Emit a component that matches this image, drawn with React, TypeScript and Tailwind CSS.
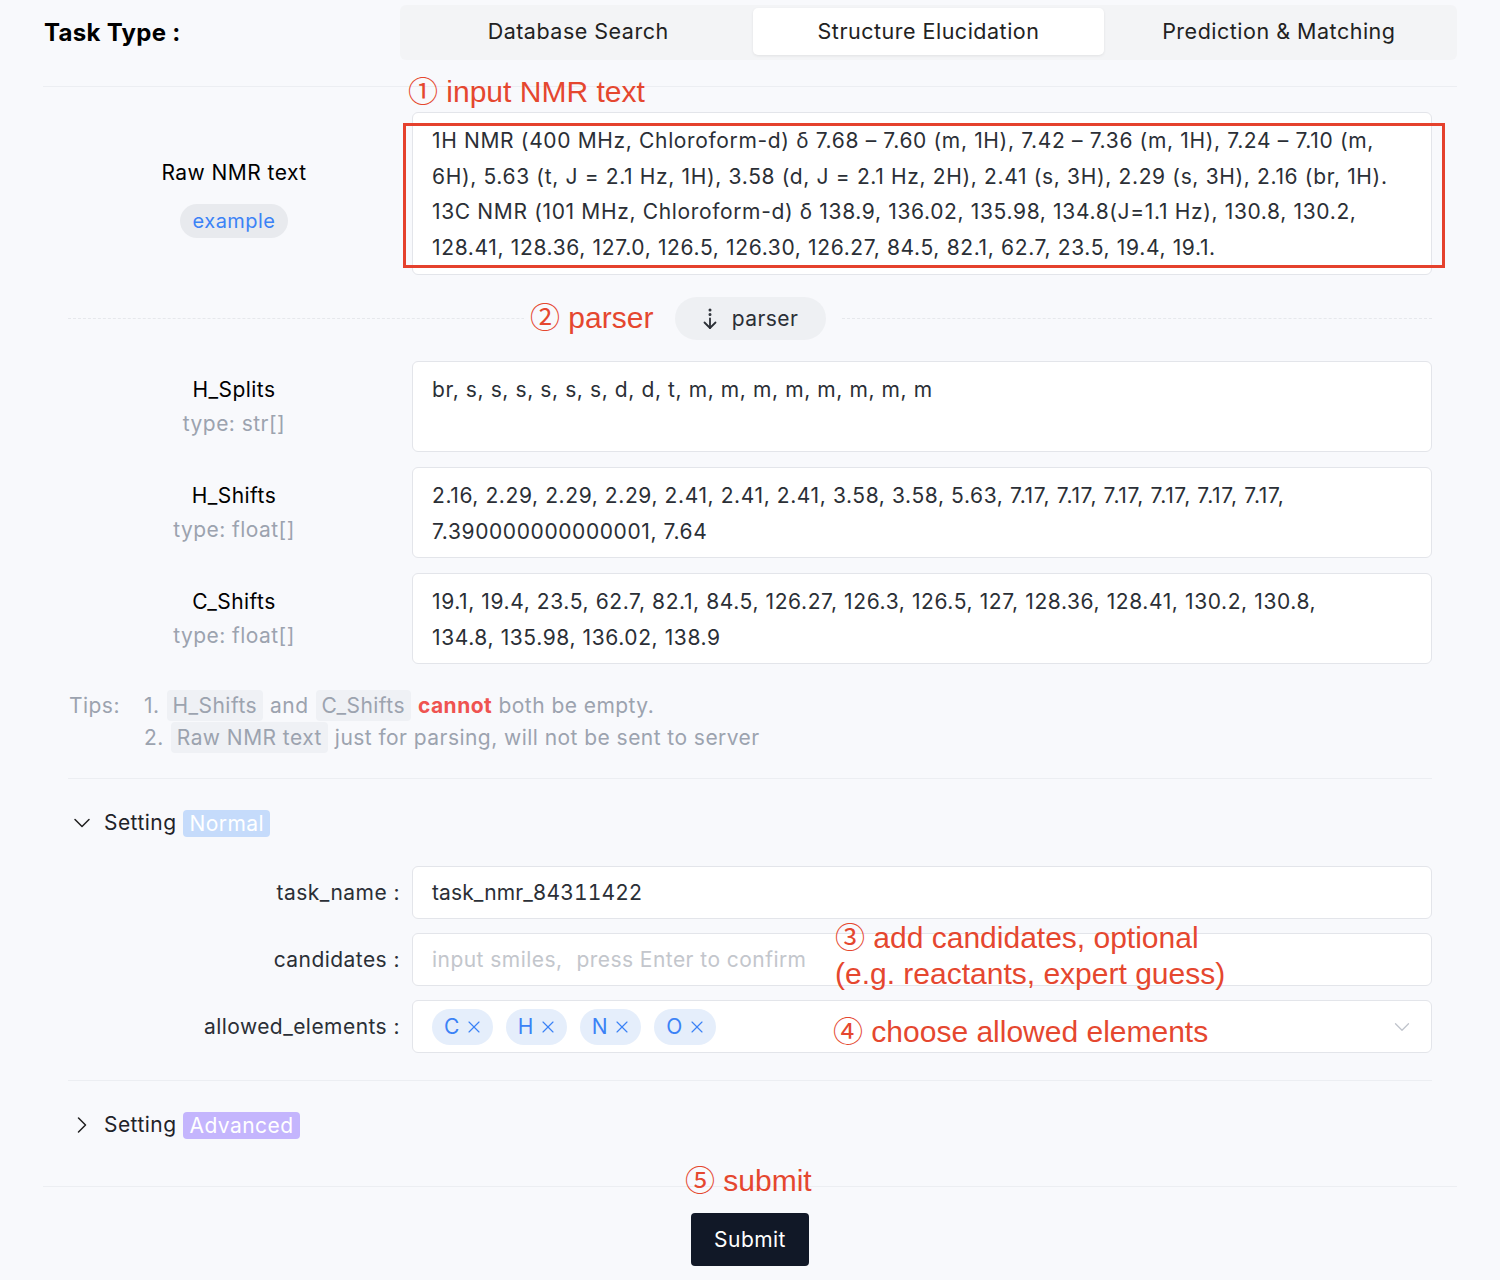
import { ChevronDown, ChevronRight, X } from 'lucide-react'

const rawLines = [
  '1H NMR (400 MHz, Chloroform-d) δ 7.68 – 7.60 (m, 1H), 7.42 – 7.36 (m, 1H), 7.24 – 7.10 (m,',
  '6H), 5.63 (t, J = 2.1 Hz, 1H), 3.58 (d, J = 2.1 Hz, 2H), 2.41 (s, 3H), 2.29 (s, 3H), 2.16 (br, 1H).',
  '13C NMR (101 MHz, Chloroform-d) δ 138.9, 136.02, 135.98, 134.8(J=1.1 Hz), 130.8, 130.2,',
  '128.41, 128.36, 127.0, 126.5, 126.30, 126.27, 84.5, 82.1, 62.7, 23.5, 19.4, 19.1.',
]

const fields = [
  { name: 'H_Splits', type: 'type: str[]', lines: ['br, s, s, s, s, s, s, d, d, t, m, m, m, m, m, m, m, m'] },
  {
    name: 'H_Shifts',
    type: 'type: float[]',
    lines: ['2.16, 2.29, 2.29, 2.29, 2.41, 2.41, 2.41, 3.58, 3.58, 5.63, 7.17, 7.17, 7.17, 7.17, 7.17, 7.17,', '7.390000000000001, 7.64'],
  },
  {
    name: 'C_Shifts',
    type: 'type: float[]',
    lines: ['19.1, 19.4, 23.5, 62.7, 82.1, 84.5, 126.27, 126.3, 126.5, 127, 128.36, 128.41, 130.2, 130.8,', '134.8, 135.98, 136.02, 138.9'],
  },
]

const tabs = ['Database Search', 'Structure Elucidation', 'Prediction & Matching']

function Code({ children }: { children: string }) {
  return <span className="mx-[7px] rounded-[4px] bg-[#eff1f5] px-[6px] py-[3px]">{children}</span>
}

function Note({ children, className }: { children: React.ReactNode; className: string }) {
  return (
    <div className={`absolute font-['Liberation_Sans','Noto_Sans_CJK_SC',sans-serif] text-[30px] leading-[36px] tracking-normal text-[#e5472f] ${className}`}>
      {children}
    </div>
  )
}

export default function App() {
  return (
    <div className="relative min-h-[1280px] bg-[#f8f9fc] font-['Inter',sans-serif] tracking-[0.45px] text-[#1f2329]">
      <div className="px-[43px]">
        {/* task type header */}
        <div className="flex items-center border-b border-[#eceef2] pb-[26px] pt-[5px]">
          <div className="w-[357px] pl-px text-[24px] font-bold tracking-[0.3px] text-black">Task Type :</div>
          <div className="flex h-[55px] flex-1 rounded-[6px] bg-[#f3f4f6] p-[3px] pb-[5px]">
            {tabs.map((t, i) => (
              <div
                key={t}
                className={`flex flex-1 items-center justify-center rounded-[5px] text-[21.5px] tracking-[0.5px] text-[#222] ${
                  i === 1 ? 'bg-white shadow-[0_1px_3px_rgba(0,0,0,0.08)]' : ''
                }`}
              >
                {t}
              </div>
            ))}
          </div>
        </div>

        <div className="px-[25px]">
          {/* raw nmr text */}
          <div className="mt-[25px] flex items-center gap-[12px]">
            <div className="flex w-[332px] flex-col items-center pt-[8px]">
              <div className="text-[21px] text-black">Raw NMR text</div>
              <div className="mt-[15px] flex h-[34px] w-[108px] items-center justify-center rounded-full bg-[#e8eaee] text-[20px] text-[#3b82f6]">
                example
              </div>
            </div>
            <div className="h-[163px] flex-1 rounded-[6px] border border-[#e3e5ea] bg-white px-[19px] pt-[10px] text-[21px] leading-[35.5px] tracking-[0.65px] text-[#2b2f36]">
              {rawLines.map(l => (
                <div key={l} className="whitespace-nowrap">{l}</div>
              ))}
            </div>
          </div>

          {/* parser divider */}
          <div className="mt-[22px] flex items-center">
            <div className="flex-1 border-t border-dashed border-[#e6e8ec]" />
            <button className="mx-[16px] flex h-[43px] w-[151px] items-center justify-center gap-[14px] rounded-full bg-[#eef0f3] text-[21px] text-[#2b2f36]">
              <svg width="16" height="24" viewBox="0 0 16 24" fill="none" stroke="#2b2f36" strokeWidth="1.8" strokeLinecap="round" strokeLinejoin="round">
                <circle cx="8" cy="3" r="0.6" fill="#2b2f36" />
                <circle cx="8" cy="7.5" r="0.6" fill="#2b2f36" />
                <path d="M8 11.5V21" />
                <path d="M2.5 15.5L8 21l5.5-5.5" />
              </svg>
              parser
            </button>
            <div className="flex-1 border-t border-dashed border-[#e6e8ec]" />
          </div>

          {/* parsed fields */}
          <div className="mt-[21px] flex flex-col gap-[15px]">
            {fields.map(f => (
              <div key={f.name} className="flex items-center gap-[12px]">
                <div className="flex w-[332px] flex-col items-center">
                  <div className="text-[21px] leading-[34px] text-black">{f.name}</div>
                  <div className="text-[21px] leading-[34px] text-[#9ca3af]">{f.type}</div>
                </div>
                <div className="h-[91px] flex-1 rounded-[6px] border border-[#e3e5ea] bg-white px-[19px] pt-[10px] text-[21px] leading-[35.5px] tracking-[0.6px] text-[#2b2f36]">
                  {f.lines.map(l => (
                    <div key={l} className="whitespace-nowrap">{l}</div>
                  ))}
                </div>
              </div>
            ))}
          </div>

          {/* tips */}
          <div className="mt-[26px] flex text-[21px] leading-[32px] text-[#9ca3af]">
            <div className="w-[76px] pl-px">Tips:</div>
            <div>
              <div>
                1.<Code>H_Shifts</Code>and<Code>C_Shifts</Code>
                <span className="font-bold text-[#ef5350]">cannot</span> both be empty.
              </div>
              <div>
                2.<Code>Raw NMR text</Code>just for parsing, will not be sent to server
              </div>
            </div>
          </div>

          <div className="mt-[24px] border-t border-[#eceef2]" />

          {/* normal settings */}
          <div className="mt-[30px] flex h-[28px] items-center">
            <ChevronDown className="h-[28px] w-[28px] text-[#222]" strokeWidth={1.3} />
            <span className="ml-[8px] text-[21px] text-[#1f2329]">Setting</span>
            <span className="ml-[7px] rounded-[4px] bg-[#c5dbfb] px-[6px] text-[21px] leading-[27px] text-white">Normal</span>
          </div>

          <div className="mt-[29px] flex flex-col gap-[14px]">
            <div className="flex items-center gap-[12px]">
              <div className="w-[332px] text-right text-[21px] text-[#2b2f36]">task_name :</div>
              <div className="flex h-[53px] flex-1 items-center rounded-[6px] border border-[#e3e5ea] bg-white px-[19px] text-[21px] tabular-nums tracking-[0.1px] text-[#2b2f36]">
                task_nmr_84311422
              </div>
            </div>
            <div className="flex items-center gap-[12px]">
              <div className="w-[332px] text-right text-[21px] text-[#2b2f36]">candidates :</div>
              <div className="flex h-[53px] flex-1 items-center rounded-[6px] border border-[#e3e5ea] bg-white px-[19px] text-[21px] text-[#c3c6cc]">
                input smiles,<span className="ml-[14px]">press Enter to confirm</span>
              </div>
            </div>
            <div className="flex items-center gap-[12px]">
              <div className="w-[332px] text-right text-[21px] text-[#2b2f36]">allowed_elements :</div>
              <div className="flex h-[53px] flex-1 items-center gap-[13px] rounded-[6px] border border-[#e3e5ea] bg-white pl-[19px] pr-[16px]">
                {['C', 'H', 'N', 'O'].map(e => (
                  <span key={e} className="flex h-[36px] items-center gap-[4px] rounded-full bg-[#e5eefb] pl-[12px] pr-[9px] text-[21px] text-[#3b82f6]">
                    {e}
                    <X className="h-[20px] w-[20px]" strokeWidth={1.4} />
                  </span>
                ))}
                <ChevronDown className="ml-auto h-[26px] w-[26px] text-[#c0c4cc]" strokeWidth={1.2} />
              </div>
            </div>
          </div>

          <div className="mt-[27px] border-t border-[#eceef2]" />

          {/* advanced settings */}
          <div className="mt-[30px] flex h-[28px] items-center">
            <ChevronRight className="h-[28px] w-[28px] text-[#222]" strokeWidth={1.3} />
            <span className="ml-[8px] text-[21px] text-[#1f2329]">Setting</span>
            <span className="ml-[7px] rounded-[4px] bg-[#c4b5fd] px-[6px] text-[21px] leading-[27px] text-white">Advanced</span>
          </div>
        </div>

        <div className="mt-[47px] border-t border-[#eceef2]" />

        <div className="mt-[26px] flex justify-center">
          <button className="h-[53px] w-[118px] rounded-[4px] bg-[#111827] text-[21px] text-white">Submit</button>
        </div>
      </div>

      {/* annotations */}
      <div className="absolute left-[403px] top-[123px] h-[145px] w-[1042px] border-[3px] border-[#e5412d]" />
      <Note className="left-[408px] top-[74px]">① input NMR text</Note>
      <Note className="left-[524px] top-[300px] bg-[#f8f9fc] px-[6px]">② parser</Note>
      <Note className="left-[835px] top-[920px]">
        ③ add candidates, optional
        <br />
        (e.g. reactants, expert guess)
      </Note>
      <Note className="left-[833px] top-[1014px]">④ choose allowed elements</Note>
      <Note className="left-[685px] top-[1163px]">⑤ submit</Note>
    </div>
  )
}
